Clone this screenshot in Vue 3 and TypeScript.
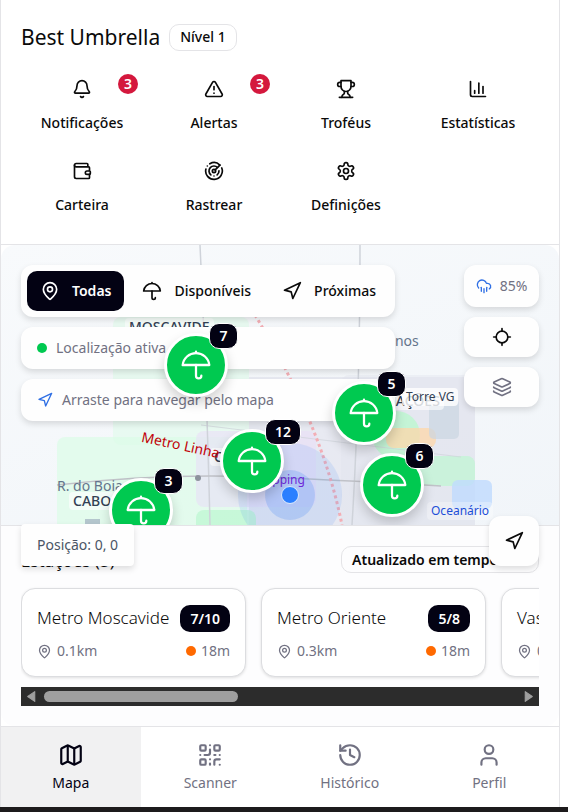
<script setup lang="ts">
import { ref } from 'vue'

type IconName =
  | 'bell' | 'alert' | 'trophy' | 'chart' | 'wallet' | 'radar' | 'settings'
  | 'pin' | 'umbrella' | 'navigation' | 'rain' | 'locate' | 'layers'
  | 'map' | 'qr' | 'history' | 'user'

const icons: Record<IconName, string[]> = {
  bell: [
    'M10.268 21a2 2 0 0 0 3.464 0',
    'M3.262 15.326A1 1 0 0 0 4 17h16a1 1 0 0 0 .74-1.673C19.41 13.956 18 12.499 18 8A6 6 0 0 0 6 8c0 4.499-1.411 5.956-2.738 7.326',
  ],
  alert: [
    'm21.73 18-8-14a2 2 0 0 0-3.48 0l-8 14A2 2 0 0 0 4 21h16a2 2 0 0 0 1.73-3',
    'M12 9v4',
    'M12 17h.01',
  ],
  trophy: [
    'M6 9H4.5a2.5 2.5 0 0 1 0-5H6',
    'M18 9h1.5a2.5 2.5 0 0 0 0-5H18',
    'M4 22h16',
    'M10 14.66V17c0 .55-.47.98-.97 1.21C7.85 18.75 7 20.24 7 22',
    'M14 14.66V17c0 .55.47.98.97 1.21C16.15 18.75 17 20.24 17 22',
    'M18 2H6v7a6 6 0 0 0 12 0V2Z',
  ],
  chart: ['M3 3v16a2 2 0 0 0 2 2h16', 'M18 17V9', 'M13 17V5', 'M8 17v-3'],
  wallet: [
    'M19 7V4a1 1 0 0 0-1-1H5a2 2 0 0 0 0 4h15a1 1 0 0 1 1 1v4h-3a2 2 0 0 0 0 4h3a1 1 0 0 0 1-1v-2a1 1 0 0 0-1-1',
    'M3 5v14a2 2 0 0 0 2 2h15a1 1 0 0 0 1-1v-4',
  ],
  radar: [
    'M19.07 4.93A10 10 0 0 0 6.99 3.34',
    'M4 6h.01',
    'M2.29 9.62A10 10 0 1 0 21.31 8.35',
    'M16.24 7.76A6 6 0 1 0 8.23 16.67',
    'M12 18h.01',
    'M17.99 11.66A6 6 0 0 1 15.77 16.67',
    'M14 12a2 2 0 1 1-4 0a2 2 0 1 1 4 0',
    'm13.41 10.59 5.66-5.66',
  ],
  settings: [
    'M12.22 2h-.44a2 2 0 0 0-2 2v.18a2 2 0 0 1-1 1.73l-.43.25a2 2 0 0 1-2 0l-.15-.08a2 2 0 0 0-2.73.73l-.22.38a2 2 0 0 0 .73 2.73l.15.1a2 2 0 0 1 1 1.72v.51a2 2 0 0 1-1 1.74l-.15.09a2 2 0 0 0-.73 2.73l.22.38a2 2 0 0 0 2.73.73l.15-.08a2 2 0 0 1 2 0l.43.25a2 2 0 0 1 1 1.73V20a2 2 0 0 0 2 2h.44a2 2 0 0 0 2-2v-.18a2 2 0 0 1 1-1.73l.43-.25a2 2 0 0 1 2 0l.15.08a2 2 0 0 0 2.73-.73l.22-.39a2 2 0 0 0-.73-2.73l-.15-.08a2 2 0 0 1-1-1.74v-.5a2 2 0 0 1 1-1.74l.15-.09a2 2 0 0 0 .73-2.73l-.22-.38a2 2 0 0 0-2.73-.73l-.15.08a2 2 0 0 1-2 0l-.43-.25a2 2 0 0 1-1-1.73V4a2 2 0 0 0-2-2z',
    'M15 12a3 3 0 1 1-6 0a3 3 0 1 1 6 0',
  ],
  pin: [
    'M20 10c0 4.993-5.539 10.193-7.399 11.799a1 1 0 0 1-1.202 0C9.539 20.193 4 14.993 4 10a8 8 0 0 1 16 0',
    'M15 10a3 3 0 1 1-6 0a3 3 0 1 1 6 0',
  ],
  umbrella: ['M22 12a10.06 10.06 1 0 0-20 0Z', 'M12 12v8a2 2 0 0 0 4 0', 'M12 2v1'],
  navigation: ['M3 11l19-9-9 19-2-8-8-2z'],
  rain: [
    'M4 14.899A7 7 0 1 1 15.71 8h1.79a4.5 4.5 0 0 1 2.5 8.242',
    'M16 14v6',
    'M8 14v6',
    'M12 16v6',
  ],
  locate: ['M2 12h3', 'M19 12h3', 'M12 2v3', 'M12 19v3', 'M19 12a7 7 0 1 1-14 0a7 7 0 1 1 14 0'],
  layers: [
    'M12.83 2.18a2 2 0 0 0-1.66 0L2.6 6.08a1 1 0 0 0 0 1.83l8.58 3.91a2 2 0 0 0 1.66 0l8.58-3.9a1 1 0 0 0 0-1.83z',
    'M2 12a1 1 0 0 0 .58.91l8.6 3.91a2 2 0 0 0 1.65 0l8.58-3.9A1 1 0 0 0 22 12',
    'M2 17a1 1 0 0 0 .58.91l8.6 3.91a2 2 0 0 0 1.65 0l8.58-3.9A1 1 0 0 0 22 17',
  ],
  map: [
    'M14.106 5.553a2 2 0 0 0 1.788 0l3.659-1.83A1 1 0 0 1 21 4.619v12.764a1 1 0 0 1-.553.894l-4.553 2.277a2 2 0 0 1-1.788 0l-4.212-2.106a2 2 0 0 0-1.788 0l-3.659 1.83A1 1 0 0 1 3 19.381V6.618a1 1 0 0 1 .553-.894l4.553-2.277a2 2 0 0 1 1.788 0z',
    'M15 5.764v15',
    'M9 3.236v15',
  ],
  qr: [
    'M4 3h3a1 1 0 0 1 1 1v3a1 1 0 0 1-1 1H4a1 1 0 0 1-1-1V4a1 1 0 0 1 1-1z',
    'M17 3h3a1 1 0 0 1 1 1v3a1 1 0 0 1-1 1h-3a1 1 0 0 1-1-1V4a1 1 0 0 1 1-1z',
    'M4 16h3a1 1 0 0 1 1 1v3a1 1 0 0 1-1 1H4a1 1 0 0 1-1-1v-3a1 1 0 0 1 1-1z',
    'M21 16h-3a2 2 0 0 0-2 2v3',
    'M21 21v.01',
    'M12 7v3a2 2 0 0 1-2 2H7',
    'M3 12h.01',
    'M12 3h.01',
    'M12 16v.01',
    'M16 12h1',
    'M21 12v.01',
    'M12 21v-1',
  ],
  history: ['M3 12a9 9 0 1 0 9-9 9.75 9.75 0 0 0-6.74 2.74L3 8', 'M3 3v5h5', 'M12 7v5l4 2'],
  user: ['M19 21v-2a4 4 0 0 0-4-4H9a4 4 0 0 0-4 4v2', 'M16 7a4 4 0 1 1-8 0a4 4 0 1 1 8 0'],
}

interface Action { label: string; icon: IconName; count?: number }
const actions: Action[] = [
  { label: 'Notificações', icon: 'bell', count: 3 },
  { label: 'Alertas', icon: 'alert', count: 3 },
  { label: 'Troféus', icon: 'trophy' },
  { label: 'Estatísticas', icon: 'chart' },
  { label: 'Carteira', icon: 'wallet' },
  { label: 'Rastrear', icon: 'radar' },
  { label: 'Definições', icon: 'settings' },
]

const filters: { label: string; icon: IconName }[] = [
  { label: 'Todas', icon: 'pin' },
  { label: 'Disponíveis', icon: 'umbrella' },
  { label: 'Próximas', icon: 'navigation' },
]
const activeFilter = ref('Todas')

const markers = [
  { id: 'moscavide', x: 195, y: 120, count: 7 },
  { id: 'oriente', x: 363, y: 168, count: 5 },
  { id: 'vasco', x: 251, y: 216, count: 12 },
  { id: 'oceanario', x: 391, y: 240, count: 6 },
  { id: 'cabo', x: 140, y: 265, count: 3 },
]

const stations = [
  { name: 'Metro Moscavide', free: '7/10', distance: '0.1km', wait: '18m' },
  { name: 'Metro Oriente', free: '5/8', distance: '0.3km', wait: '18m' },
  { name: 'Vasco da Gama', free: '12/15', distance: '0.4km', wait: '18m' },
]

const tabs: { label: string; icon: IconName }[] = [
  { label: 'Mapa', icon: 'map' },
  { label: 'Scanner', icon: 'qr' },
  { label: 'Histórico', icon: 'history' },
  { label: 'Perfil', icon: 'user' },
]
const activeTab = ref('Mapa')
</script>

<template>
  <div class="app">
    <header class="header">
      <div class="title-row">
        <h1>Best Umbrella</h1>
        <span class="tag">Nível 1</span>
      </div>
      <div class="actions">
        <button v-for="a in actions" :key="a.label" type="button" class="action">
          <svg class="icon" viewBox="0 0 24 24" aria-hidden="true"><path v-for="d in icons[a.icon]" :key="d" :d="d" /></svg>
          <span>{{ a.label }}</span>
          <span v-if="a.count" class="count">{{ a.count }}</span>
        </button>
      </div>
    </header>

    <main class="main">
      <section class="map" aria-label="Mapa">
        <div class="canvas">
          <svg class="terrain" aria-hidden="true">
            <rect x="112" y="72" width="136" height="128" rx="8" fill="#dcfce7" opacity=".5" />
            <rect x="248" y="132" width="226" height="200" fill="#e2e4ee" opacity=".7" />
            <rect x="340" y="130" width="134" height="180" rx="8" fill="#e2e4ee" opacity=".4" />
            <rect x="56" y="192" width="190" height="120" rx="8" fill="#dcfce7" opacity=".7" />
            <rect x="195" y="186" width="120" height="76" rx="8" fill="#eadcf8" opacity=".55" />
            <rect x="195" y="265" width="60" height="40" rx="8" fill="#bbf7d0" opacity=".7" />
            <circle cx="395" cy="190" r="24" fill="#bbf7d0" opacity=".8" />
            <rect x="385" y="183" width="50" height="20" rx="8" fill="#fed7aa" opacity=".75" />
            <rect x="428" y="154" width="30" height="40" rx="5" fill="#cbd5e1" opacity=".7" />
            <rect x="404" y="211" width="70" height="30" rx="8" fill="#bbf7d0" opacity=".65" />
            <rect x="451" y="235" width="40" height="29" rx="6" fill="#bfdbfe" opacity=".8" />
            <rect x="84" y="274" width="15" height="12" fill="#94a3b8" opacity=".6" />
            <g fill="none" stroke="#cfd3da" stroke-width="1.5">
              <path d="M199 0Q206 150 209 280M359 0Q359 150 351 280" />
              <path d="M56 240Q160 228 260 232T440 241" stroke="#c0c2c8" />
              <path d="M200 180L460 212" stroke-width="1" opacity=".7" />
            </g>
            <path d="M254 70Q321 180 341 280" fill="none" stroke="#f3aeb5" stroke-width="3" stroke-dasharray="3 3" />
            <circle cx="197" cy="233" r="3" fill="#8d939d" />
            <circle cx="289" cy="250" r="52" fill="#3b82f6" opacity=".12" />
            <circle cx="289" cy="250" r="25" fill="#3b82f6" opacity=".22" />
          </svg>
          <span class="place district moscavide">MOSCAVIDE</span>
          <span class="place oceanos">R. dos Oceanos</span>
          <span class="place district nacoes">NAÇÕES</span>
          <span class="place torre">Torre VG</span>
          <span class="place district center">C</span>
          <span class="place metro">Metro Linha</span>
          <span class="place boi">R. do Boia</span>
          <span class="place district cabo">CABO</span>
          <span class="place shopping">Shopping</span>
          <span class="place oceanario">Oceanário</span>
          <i class="me"></i>
        </div>

        <div class="overlay">
          <div class="left-tools">
            <div class="filters">
              <button
                v-for="f in filters"
                :key="f.label"
                type="button"
                class="filter"
                :class="{ active: activeFilter === f.label }"
                @click="activeFilter = f.label"
              >
                <svg class="icon" viewBox="0 0 24 24" aria-hidden="true"><path v-for="d in icons[f.icon]" :key="d" :d="d" /></svg>
                <span>{{ f.label }}</span>
              </button>
            </div>
            <div class="notice"><i class="dot green"></i><span>Localização ativa</span></div>
            <div class="notice">
              <svg class="icon small blue" viewBox="0 0 24 24" aria-hidden="true"><path v-for="d in icons.navigation" :key="d" :d="d" /></svg>
              <span>Arraste para navegar pelo mapa</span>
            </div>
          </div>
          <div class="right-tools">
            <div class="tool weather">
              <svg class="icon small blue" viewBox="0 0 24 24" aria-hidden="true"><path v-for="d in icons.rain" :key="d" :d="d" /></svg>
              <span>85%</span>
            </div>
            <button type="button" class="tool" aria-label="Centrar">
              <svg class="icon" viewBox="0 0 24 24" aria-hidden="true"><path v-for="d in icons.locate" :key="d" :d="d" /></svg>
            </button>
            <button type="button" class="tool muted" aria-label="Camadas">
              <svg class="icon" viewBox="0 0 24 24" aria-hidden="true"><path v-for="d in icons.layers" :key="d" :d="d" /></svg>
            </button>
          </div>
        </div>

        <div class="markers">
          <button
            v-for="m in markers"
            :key="m.id"
            type="button"
            class="marker"
            :style="{ left: m.x + 'px', top: m.y + 'px' }"
          >
            <svg class="icon large" viewBox="0 0 24 24" aria-hidden="true"><path v-for="d in icons.umbrella" :key="d" :d="d" /></svg>
            <span class="marker-count">{{ m.count }}</span>
          </button>
        </div>

        <div class="position">Posição: 0, 0</div>
        <button type="button" class="go" aria-label="Navegar">
          <svg class="icon" viewBox="0 0 24 24" aria-hidden="true"><path v-for="d in icons.navigation" :key="d" :d="d" /></svg>
        </button>
      </section>

      <section class="panel">
        <div class="panel-head">
          <h2>Estações (5)</h2>
          <span class="tag live">Atualizado em tempo real</span>
        </div>
        <div class="cards">
          <article v-for="s in stations" :key="s.name" class="card">
            <div class="card-row">
              <h3>{{ s.name }}</h3>
              <span class="free">{{ s.free }}</span>
            </div>
            <div class="card-row meta">
              <span class="bit">
                <svg class="icon tiny" viewBox="0 0 24 24" aria-hidden="true"><path v-for="d in icons.pin" :key="d" :d="d" /></svg>
                {{ s.distance }}
              </span>
              <span class="bit"><i class="dot orange"></i>{{ s.wait }}</span>
            </div>
          </article>
        </div>
        <div class="scrollbar" aria-hidden="true">
          <svg class="arrow" viewBox="0 0 10 12"><path d="M8 1.5v9L1.500 6z" /></svg>
          <div class="track"><div class="thumb"></div></div>
          <svg class="arrow" viewBox="0 0 10 12"><path d="M2 1.500v9L8.500 6z" /></svg>
        </div>
      </section>
    </main>

    <nav class="tabs">
      <button
        v-for="t in tabs"
        :key="t.label"
        type="button"
        class="tab"
        :class="{ active: activeTab === t.label }"
        @click="activeTab = t.label"
      >
        <svg class="icon tab-icon" viewBox="0 0 24 24" aria-hidden="true"><path v-for="d in icons[t.icon]" :key="d" :d="d" /></svg>
        <span>{{ t.label }}</span>
      </button>
    </nav>
  </div>
</template>

<style>
body {
  background: #fff;
  border-bottom: 5px solid #1d1b1c;
}
</style>

<style scoped>
* {
  box-sizing: border-box;
}
.app {
  margin-right: 8px;
  border: solid #e4e4e7;
  border-width: 0 1px;
  font-family: "Noto Sans", "Open Sans", sans-serif;
  font-size: 14px;
  line-height: 20px;
  color: #0a0a0a;
  background: #fff;
}
button {
  font: inherit;
  color: inherit;
  border: 0;
  padding: 0;
  background: none;
  cursor: pointer;
}
h1,
h2,
h3 {
  margin: 0;
  font-weight: 400;
}
.icon {
  display: block;
  flex: none;
  width: 20px;
  height: 20px;
  fill: none;
  stroke: currentColor;
  stroke-width: 2;
  stroke-linecap: round;
  stroke-linejoin: round;
}
.icon.small {
  width: 16px;
  height: 16px;
}
.icon.tiny {
  width: 15px;
  height: 15px;
}
.icon.large {
  width: 32px;
  height: 32px;
}
.icon.tab-icon {
  width: 26px;
  height: 26px;
}
.blue {
  color: #2f6fe4;
}
.header {
  padding: 20px;
  border-bottom: 1px solid #e4e4e7;
}
.title-row {
  display: flex;
  align-items: center;
  gap: 9px;
  height: 34px;
}
h1 {
  font-size: 21px;
  line-height: 34px;
  white-space: nowrap;
}
.tag {
  display: inline-flex;
  align-items: center;
  height: 27px;
  padding: 0 10px;
  border: 1px solid #e4e4e7;
  border-radius: 10px;
  font-weight: 500;
  white-space: nowrap;
}
.actions {
  display: grid;
  grid-template-columns: repeat(4, 1fr);
  gap: 10px;
  margin-top: 16px;
}
.action {
  position: relative;
  display: flex;
  flex-direction: column;
  align-items: center;
  gap: 14px;
  height: 72px;
  padding-top: 9px;
  font-weight: 500;
}
.count {
  position: absolute;
  top: 4px;
  right: 5px;
  width: 20px;
  height: 20px;
  border-radius: 50%;
  background: #d4183d;
  color: #fff;
  font-weight: 600;
  text-align: center;
}
.map {
  position: relative;
  z-index: 1;
  height: 280px;
}
.canvas {
  position: absolute;
  inset: 0;
  overflow: hidden;
  border-radius: 14px 14px 0 0;
  background: linear-gradient(160deg, #f8fafc, #f1f5f9);
}
.terrain {
  display: block;
  width: 100%;
  height: 100%;
}
.place {
  position: absolute;
  line-height: 18px;
  color: #64748b;
  white-space: nowrap;
}
.district {
  padding: 0 4px;
  border-radius: 4px;
  background: rgba(255, 255, 255, 0.6);
  color: #334155;
  font-weight: 500;
}
.moscavide { left: 124px; top: 73px; }
.oceanos { left: 317px; top: 87px; }
.nacoes { left: 380px; top: 147px; }
.torre {
  left: 401px;
  top: 143px;
  padding: 0 4px;
  border-radius: 4px;
  background: rgba(255, 255, 255, 0.8);
  color: #334155;
  font-size: 12px;
}
.center { left: 209px; top: 203px; }
.metro {
  left: 140px;
  top: 191px;
  color: #c10007;
  transform: rotate(12deg);
}
.boi { left: 56px; top: 232px; }
.cabo { left: 68px; top: 247px; }
.shopping {
  left: 250px;
  top: 226px;
  font-size: 12px;
  color: #6d28d9;
}
.oceanario {
  left: 426px;
  top: 257px;
  padding: 0 4px;
  border-radius: 4px;
  background: rgba(255, 255, 255, 0.3);
  font-size: 12px;
  color: #1d4ed8;
}
.me {
  position: absolute;
  left: 280px;
  top: 241px;
  width: 18px;
  height: 18px;
  border: 1px solid #dbeafe;
  border-radius: 50%;
  background: #2b7fff;
}
.overlay {
  position: relative;
  display: flex;
  justify-content: space-between;
  align-items: flex-start;
  padding: 20px;
}
.left-tools,
.right-tools {
  display: flex;
  flex-direction: column;
  gap: 10px;
}
.right-tools {
  width: 75px;
}
.filters,
.notice,
.tool,
.go,
.position {
  background: #fefefe;
  border-radius: 12px;
  box-shadow: 0 3px 6px rgba(0, 0, 0, 0.13);
}
.filters {
  display: flex;
  gap: 5px;
  padding: 6px;
}
.filter {
  display: flex;
  align-items: center;
  gap: 12px;
  height: 40px;
  padding: 0 13px;
  border-radius: 10px;
  font-weight: 500;
}
.filter.active {
  background: #030213;
  color: #fff;
  font-weight: 600;
}
.notice {
  display: flex;
  align-items: center;
  gap: 9px;
  height: 42px;
  padding: 0 16px;
  color: #717182;
}
.dot {
  width: 10px;
  height: 10px;
  border-radius: 50%;
}
.green {
  background: #00c950;
}
.orange {
  background: #ff6900;
}
.tool {
  display: flex;
  align-items: center;
  justify-content: center;
  height: 40px;
}
.weather {
  height: 42px;
  gap: 8px;
  color: #717182;
}
.muted {
  color: #717182;
}
.markers {
  position: absolute;
  inset: -10px 0 0;
  overflow: hidden;
  pointer-events: none;
}
.marker {
  position: absolute;
  display: grid;
  place-items: center;
  width: 64px;
  height: 64px;
  margin: -22px 0 0 -32px;
  border: 3px solid #fff;
  border-radius: 50%;
  background: #00c950;
  color: #fff;
  box-shadow: 0 6px 12px rgba(0, 0, 0, 0.18);
  pointer-events: auto;
}
.marker .icon {
  stroke-width: 1.7;
}
.marker-count {
  position: absolute;
  left: 42px;
  top: -13px;
  min-width: 29px;
  height: 26px;
  padding: 0 9px;
  border: 1px solid #fff;
  border-radius: 10px;
  background: #030213;
  font-weight: 600;
  line-height: 24px;
  text-align: center;
}
.position {
  position: absolute;
  left: 20px;
  bottom: -41px;
  height: 42px;
  padding: 0 16px;
  border-radius: 4px;
  color: #4a5565;
  line-height: 42px;
}
.go {
  position: absolute;
  right: 20px;
  bottom: -41px;
  display: grid;
  place-items: center;
  width: 50px;
  height: 50px;
}
.panel {
  padding: 20px;
  border-top: 1px solid #e4e4e7;
  border-radius: 0 0 14px 14px;
  background: #fdfdfe;
}
.panel-head {
  display: flex;
  align-items: flex-end;
  justify-content: space-between;
  height: 27px;
}
h2 {
  font-size: 17px;
  line-height: 24px;
}
.live {
  font-weight: 600;
}
.cards {
  display: flex;
  gap: 15px;
  margin-top: 10px;
  padding: 5px 0 10px;
  overflow: hidden;
}
.card {
  flex: none;
  width: 225px;
  height: 89px;
  padding: 14px 15px;
  border: 1px solid #dcdde0;
  border-radius: 14px;
  background: #fff;
  box-shadow: 0 1px 3px rgba(0, 0, 0, 0.12);
}
.card-row {
  display: flex;
  align-items: center;
  justify-content: space-between;
  white-space: nowrap;
}
h3 {
  font-size: 17px;
  line-height: 30px;
  font-weight: 300;
}
.free {
  height: 27px;
  padding: 0 10px;
  border-radius: 10px;
  background: #030213;
  color: #fff;
  font-weight: 600;
  line-height: 27px;
}
.meta {
  margin-top: 8px;
  color: #717182;
}
.bit {
  display: flex;
  align-items: center;
  gap: 5px;
}
.scrollbar {
  display: flex;
  align-items: center;
  gap: 7px;
  height: 19px;
  padding: 0 5px;
  background: #2c2c2c;
}
.arrow {
  flex: none;
  width: 11px;
  height: 13px;
  fill: #9f9f9f;
  stroke: #9f9f9f;
  stroke-linejoin: round;
}
.track {
  flex: 1;
}
.thumb {
  width: 41%;
  height: 11px;
  border-radius: 6px;
  background: #9f9f9f;
}
.tabs {
  display: grid;
  grid-template-columns: repeat(4, 1fr);
  border-top: 1px solid #e4e4e7;
}
.tab {
  display: flex;
  flex-direction: column;
  align-items: center;
  gap: 5px;
  height: 80px;
  padding-top: 15px;
  color: #717182;
}
.tab.active {
  background: #f1f1f2;
  color: #030213;
}
</style>
